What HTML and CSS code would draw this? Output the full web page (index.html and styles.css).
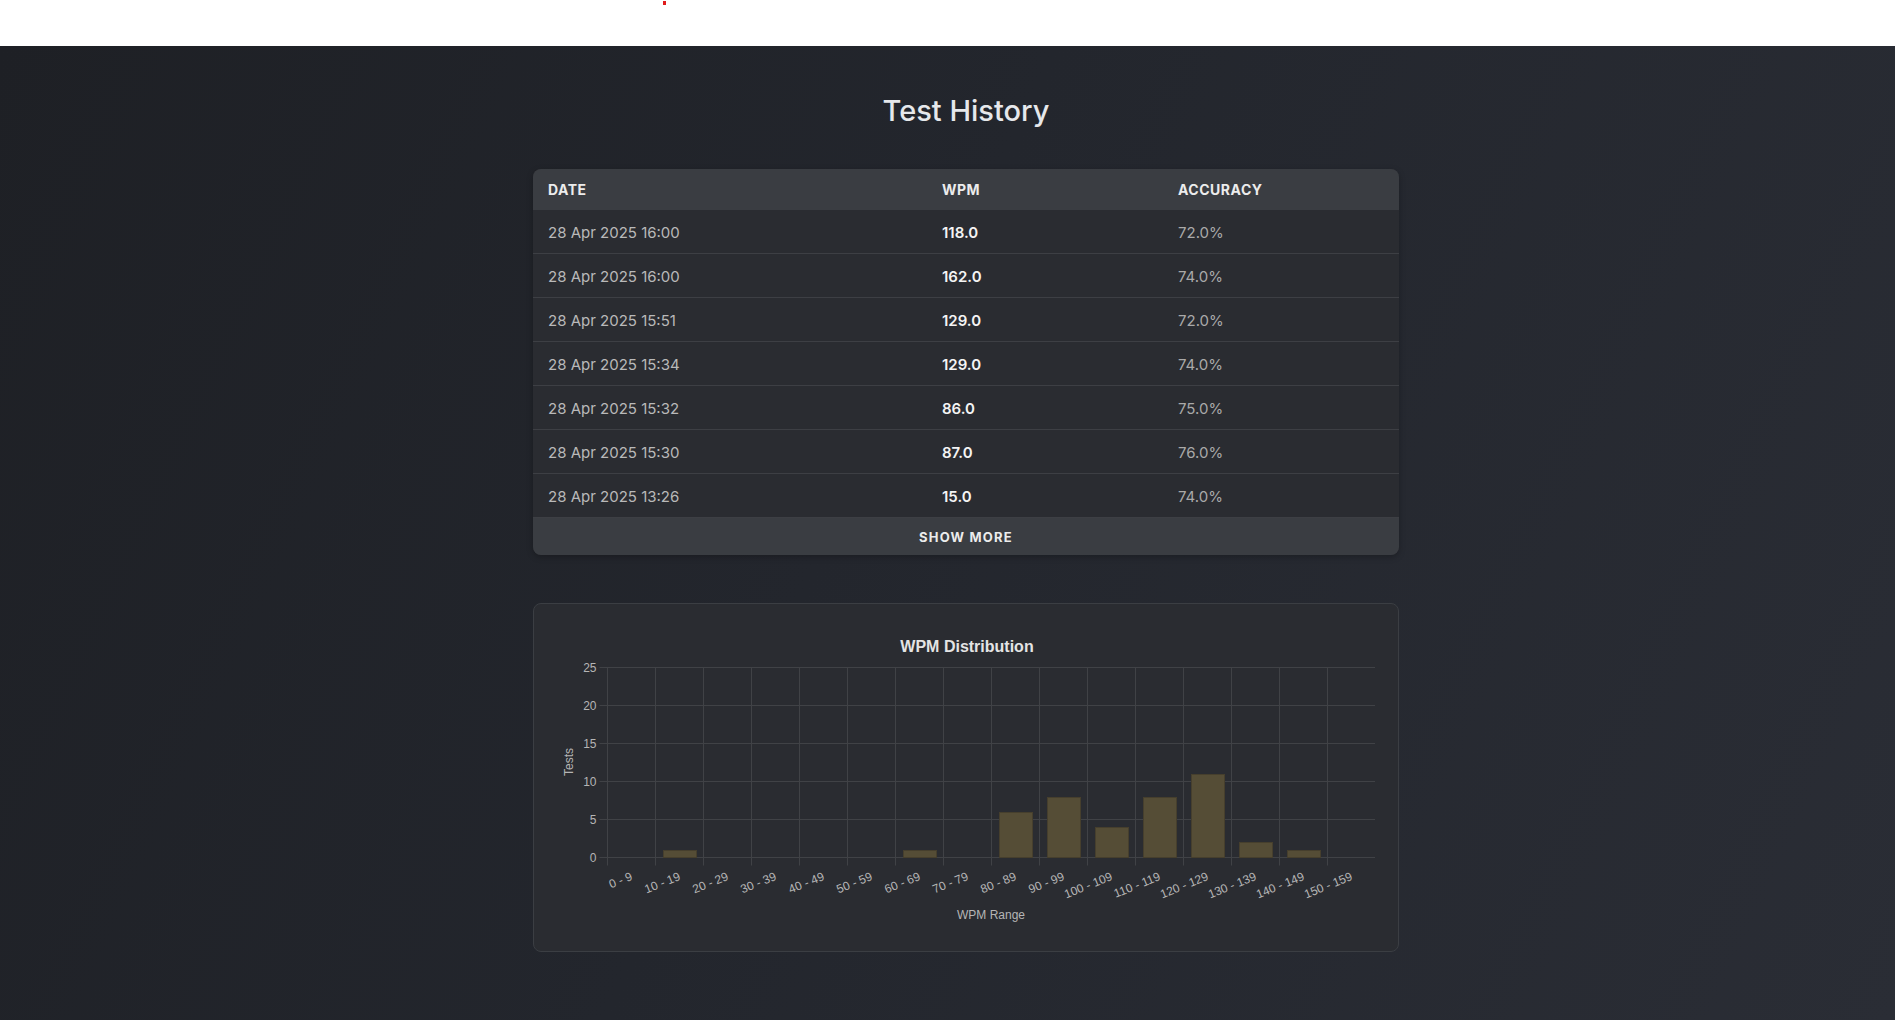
FILE: index.html
```html
<!DOCTYPE html>
<html lang="en">
<head>
<meta charset="utf-8">
<title>Test History</title>
<link rel="stylesheet" href="styles.css">
</head>
<body>
<header class="topbar"><span class="dot"></span></header>
<main class="main">
  <h1 class="title">Test History</h1>
  <section class="history">
    <div class="row head">
      <div class="cell">DATE</div>
      <div class="cell">WPM</div>
      <div class="cell">ACCURACY</div>
    </div>
    <div class="row"><div class="cell date">28 Apr 2025 16:00</div><div class="cell wpm">118.0</div><div class="cell acc">72.0%</div></div>
    <div class="row"><div class="cell date">28 Apr 2025 16:00</div><div class="cell wpm">162.0</div><div class="cell acc">74.0%</div></div>
    <div class="row"><div class="cell date">28 Apr 2025 15:51</div><div class="cell wpm">129.0</div><div class="cell acc">72.0%</div></div>
    <div class="row"><div class="cell date">28 Apr 2025 15:34</div><div class="cell wpm">129.0</div><div class="cell acc">74.0%</div></div>
    <div class="row"><div class="cell date">28 Apr 2025 15:32</div><div class="cell wpm">86.0</div><div class="cell acc">75.0%</div></div>
    <div class="row"><div class="cell date">28 Apr 2025 15:30</div><div class="cell wpm">87.0</div><div class="cell acc">76.0%</div></div>
    <div class="row"><div class="cell date">28 Apr 2025 13:26</div><div class="cell wpm">15.0</div><div class="cell acc">74.0%</div></div>
    <button class="more">SHOW MORE</button>
  </section>

  <section class="chart-card">
    <svg class="chart" width="864" height="347" viewBox="0 0 864 347" xmlns="http://www.w3.org/2000/svg">
      <text class="c-title" x="433" y="48" text-anchor="middle">WPM Distribution</text>
      <g class="grid">
        <line x1="65.5" y1="63.5" x2="841" y2="63.5"/>
        <line x1="65.5" y1="101.5" x2="841" y2="101.5"/>
        <line x1="65.5" y1="139.5" x2="841" y2="139.5"/>
        <line x1="65.5" y1="177.5" x2="841" y2="177.5"/>
        <line x1="65.5" y1="215.5" x2="841" y2="215.5"/>
        <line x1="65.5" y1="253.5" x2="841" y2="253.5"/>
        <line x1="73.5" y1="63.5" x2="73.5" y2="261.5"/>
        <line x1="121.5" y1="63.5" x2="121.5" y2="261.5"/>
        <line x1="169.5" y1="63.5" x2="169.5" y2="261.5"/>
        <line x1="217.5" y1="63.5" x2="217.5" y2="261.5"/>
        <line x1="265.5" y1="63.5" x2="265.5" y2="261.5"/>
        <line x1="313.5" y1="63.5" x2="313.5" y2="261.5"/>
        <line x1="361.5" y1="63.5" x2="361.5" y2="261.5"/>
        <line x1="409.5" y1="63.5" x2="409.5" y2="261.5"/>
        <line x1="457.5" y1="63.5" x2="457.5" y2="261.5"/>
        <line x1="505.5" y1="63.5" x2="505.5" y2="261.5"/>
        <line x1="553.5" y1="63.5" x2="553.5" y2="261.5"/>
        <line x1="601.5" y1="63.5" x2="601.5" y2="261.5"/>
        <line x1="649.5" y1="63.5" x2="649.5" y2="261.5"/>
        <line x1="697.5" y1="63.5" x2="697.5" y2="261.5"/>
        <line x1="745.5" y1="63.5" x2="745.5" y2="261.5"/>
        <line x1="793.5" y1="63.5" x2="793.5" y2="261.5"/>
      </g>
      <g class="bars">
        <rect x="129.5" y="246.5" width="33" height="7"/>
        <rect x="369.5" y="246.5" width="33" height="7"/>
        <rect x="465.5" y="208.5" width="33" height="45"/>
        <rect x="513.5" y="193.5" width="33" height="60"/>
        <rect x="561.5" y="223.5" width="33" height="30"/>
        <rect x="609.5" y="193.5" width="33" height="60"/>
        <rect x="657.5" y="170.5" width="33" height="83"/>
        <rect x="705.5" y="238.5" width="33" height="15"/>
        <rect x="753.5" y="246.5" width="33" height="7"/>
      </g>
      <g class="ylab">
        <text x="62.5" y="67.5">25</text>
        <text x="62.5" y="105.5">20</text>
        <text x="62.5" y="143.5">15</text>
        <text x="62.5" y="181.5">10</text>
        <text x="62.5" y="219.5">5</text>
        <text x="62.5" y="257.5">0</text>
      </g>
      <text class="axis" transform="translate(39 158) rotate(-90)" text-anchor="middle">Tests</text>
      <g class="xlab">
        <text transform="translate(96 267.5) rotate(-22)" y="8.6">0 - 9</text>
        <text transform="translate(144 267.5) rotate(-22)" y="8.6">10 - 19</text>
        <text transform="translate(192 267.5) rotate(-22)" y="8.6">20 - 29</text>
        <text transform="translate(240 267.5) rotate(-22)" y="8.6">30 - 39</text>
        <text transform="translate(288 267.5) rotate(-22)" y="8.6">40 - 49</text>
        <text transform="translate(336 267.5) rotate(-22)" y="8.6">50 - 59</text>
        <text transform="translate(384 267.5) rotate(-22)" y="8.6">60 - 69</text>
        <text transform="translate(432 267.5) rotate(-22)" y="8.6">70 - 79</text>
        <text transform="translate(480 267.5) rotate(-22)" y="8.6">80 - 89</text>
        <text transform="translate(528 267.5) rotate(-22)" y="8.6">90 - 99</text>
        <text transform="translate(576 267.5) rotate(-22)" y="8.6">100 - 109</text>
        <text transform="translate(624 267.5) rotate(-22)" y="8.6">110 - 119</text>
        <text transform="translate(672 267.5) rotate(-22)" y="8.6">120 - 129</text>
        <text transform="translate(720 267.5) rotate(-22)" y="8.6">130 - 139</text>
        <text transform="translate(768 267.5) rotate(-22)" y="8.6">140 - 149</text>
        <text transform="translate(816 267.5) rotate(-22)" y="8.6">150 - 159</text>
      </g>
      <text class="axis" x="457" y="315" text-anchor="middle">WPM Range</text>
    </svg>
  </section>
</main>
</body>
</html>
```

FILE: styles.css
```css
html, body {
  margin: 0;
  padding: 0;
}

body {
  min-height: 100vh;
  background: #ffffff;
  font-family: Inter, "Noto Sans", sans-serif;
}

.topbar {
  height: 46px;
  background: #ffffff;
  display: flex;
  align-items: flex-start;
}

.dot {
  display: block;
  width: 3px;
  height: 4px;
  margin-left: 663px;
  margin-top: 1px;
  background: #e01b1b;
}

.main {
  min-height: calc(100vh - 46px);
  box-sizing: border-box;
  padding: 45px 0 60px 37px;
  background: linear-gradient(115deg, #1e2025 0%, #23262d 45%, #2a2d35 100%);
  display: flex;
  flex-direction: column;
  align-items: center;
}

.title {
  margin: 0 0 38px;
  font-size: 29px;
  line-height: 40px;
  font-weight: 500;
  color: #e6e8eb;
  text-align: center;
}

.history {
  width: 866px;
  border-radius: 8px;
  overflow: hidden;
  background: #2a2c31;
  box-shadow: 0 2px 6px rgba(0, 0, 0, 0.25);
  display: flex;
  flex-direction: column;
}

.row {
  display: grid;
  grid-template-columns: 394px 236px 1fr;
  height: 44px;
  box-sizing: border-box;
  padding-top: 1px;
  border-bottom: 1px solid #3d3f44;
  align-items: center;
  font-size: 15px;
}

.row.head {
  height: 41px;
  padding-top: 0;
  border-bottom: none;
  background: #3a3d42;
  font-size: 14px;
  font-weight: 700;
  letter-spacing: 0.5px;
  color: #ececec;
}

.cell {
  padding: 0 15px;
}

.date {
  color: #b9b9b9;
}

.wpm {
  color: #f4f4f4;
  font-weight: 600;
}

.acc {
  color: #a9a9a9;
}

.more {
  height: 37px;
  border: none;
  margin: 0;
  padding: 0;
  background: #3a3d42;
  color: #ececec;
  font-family: Inter, "Noto Sans", sans-serif;
  font-size: 13px;
  font-weight: 700;
  letter-spacing: 1.2px;
  cursor: pointer;
}

.chart-card {
  width: 866px;
  box-sizing: border-box;
  margin-top: 48px;
  border: 1px solid #3b3e43;
  border-radius: 8px;
  background: #2a2c31;
}

.chart {
  display: block;
  font-family: "Liberation Sans", Arial, sans-serif;
}

.c-title {
  font-size: 16px;
  font-weight: 700;
  fill: #e4e4e4;
}

.grid line {
  stroke: #404246;
  stroke-width: 1;
}

.bars rect {
  fill: #554d36;
  stroke: #463f2d;
  stroke-width: 1;
}

.ylab text {
  font-size: 12px;
  fill: #b5b5b5;
  text-anchor: end;
}

.xlab text {
  font-size: 12px;
  fill: #b5b5b5;
  text-anchor: end;
}

.axis {
  font-size: 12px;
  fill: #b5b5b5;
}
```
